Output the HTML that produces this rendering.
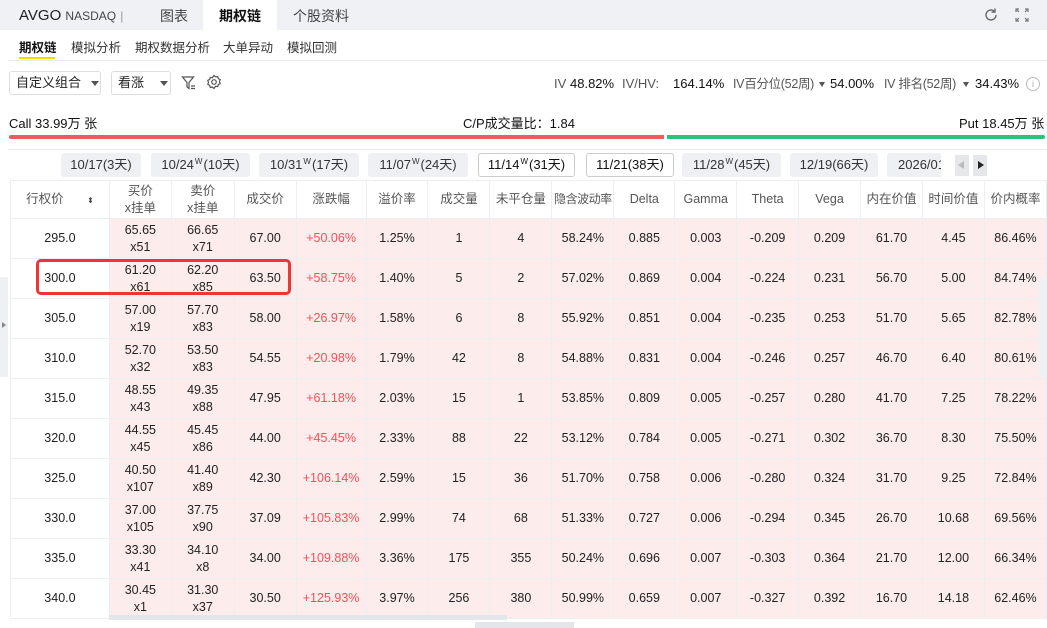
<!DOCTYPE html>
<html><head><meta charset="utf-8"><style>
*{margin:0;padding:0;box-sizing:border-box}
body{width:1047px;height:628px;overflow:hidden;background:#fff;font-family:"Liberation Sans","Noto Sans CJK SC",sans-serif;color:#222;font-size:13px;position:relative}
.a{position:absolute;white-space:nowrap}
.top{left:0;top:0;width:1047px;height:30px;background:#f0f1f4}
.tab{top:0;height:30px;line-height:32px;font-size:14px;color:#444}
.sel{background:#fff;color:#111;font-weight:bold;text-align:center}
.sub{top:37px;font-size:12.5px;color:#333}
.dd{top:71px;height:24px;border:1px solid #dcdde0;border-radius:3px;line-height:22px;padding-left:6px;font-size:13px}
.tri{display:inline-block;width:0;height:0;border-left:4px solid transparent;border-right:4px solid transparent;border-top:5px solid #555;vertical-align:middle}
.iv{top:76px;font-size:13px;color:#555;line-height:16px;height:16px}
.ivv{top:76px;font-size:13px;color:#111;line-height:16px;height:16px}
.date{top:153px;height:24px;line-height:24px;text-align:center;background:#eff0f3;border-radius:3px;font-size:13px;color:#333}
.date.b{background:#fff;border:1px solid #ccc;color:#111;line-height:22px}
.w{font-size:8px;position:relative;top:-5px;margin:0 1px}
table{position:absolute;left:10px;top:180px;border-collapse:collapse;table-layout:fixed}
td,th{border:1px solid #eceef1;text-align:center;font-size:12.5px;font-weight:normal;height:40px;padding:0;line-height:17px;white-space:nowrap;overflow:hidden}
th{color:#555;height:38px}
td.p{background:#fcecec}
td.r{color:#f0525a}
</style></head><body>
<div class="a top"></div>
<div class="a" style="left:19px;top:7px;font-size:15px;color:#222">AVGO <span style="font-size:12px;color:#444">NASDAQ</span> <span style="color:#999;font-size:12px">|</span></div>
<div class="a tab" style="left:160px">图表</div>
<div class="a tab sel" style="left:203px;width:74px">期权链</div>
<div class="a tab" style="left:293px">个股资料</div>
<svg class="a" style="left:983px;top:7px" width="16" height="16" viewBox="0 0 16 16"><path d="M13 8a5 5 0 1 1-1.6-3.7" fill="none" stroke="#666" stroke-width="1.4"/><path d="M12 1.5v3.5h-3.5" fill="none" stroke="#666" stroke-width="1.4"/></svg>
<svg class="a" style="left:1014px;top:7px" width="16" height="16" viewBox="0 0 16 16" fill="none" stroke="#777" stroke-width="1.2"><path d="M2 5V2h3M11 2h3v3M14 11v3h-3M5 14H2v-3M2 2l3 3M14 2l-3 3M14 14l-3-3M2 14l3-3"/></svg>
<div class="a sub" style="left:19px;font-weight:bold;color:#111">期权链</div>
<div class="a" style="left:19px;top:57px;width:36px;height:2px;background:#f7d900"></div>
<div class="a sub" style="left:71px">模拟分析</div>
<div class="a sub" style="left:135px">期权数据分析</div>
<div class="a sub" style="left:223px">大单异动</div>
<div class="a sub" style="left:287px">模拟回测</div>
<div class="a" style="left:8px;top:60px;width:1039px;height:1px;background:#e8e9ec"></div>
<div class="a dd" style="left:9px;width:92px">自定义组合 <span class="tri" style="margin-left:6px"></span></div>
<div class="a dd" style="left:111px;width:60px">看涨 <span class="tri" style="margin-left:12px"></span></div>
<svg class="a" style="left:181px;top:75px" width="16" height="16" viewBox="0 0 16 16" fill="none" stroke="#555" stroke-width="1.2"><path d="M1.5 2h11l-4.5 5.5v6l-2-1.5v-4.5z M10 11h4M10 13.5h4"/></svg>
<svg class="a" style="left:206px;top:74px" width="16" height="16" viewBox="0 0 16 16" fill="none" stroke="#555" stroke-width="1.2"><circle cx="8" cy="8" r="2.3"/><path d="M8 1.5l1.6 1.4 2.1-.3.6 2 1.9 1-.7 2 .7 2-1.9 1-.6 2-2.1-.3L8 14.5l-1.6-1.4-2.1.3-.6-2-1.9-1 .7-2-.7-2 1.9-1 .6-2 2.1.3z"/></svg>
<div class="a iv" style="left:554px">IV</div>
<div class="a ivv" style="left:570px">48.82%</div>
<div class="a iv" style="left:622px">IV/HV:</div>
<div class="a ivv" style="left:673px">164.14%</div>
<div class="a iv" style="left:733px;font-size:12.5px;letter-spacing:-0.3px">IV百分位(52周)</div>
<div class="a" style="left:819px;top:82px;border-left:3.5px solid transparent;border-right:3.5px solid transparent;border-top:5px solid #555"></div>
<div class="a ivv" style="left:830px">54.00%</div>
<div class="a iv" style="left:884px;font-size:12.5px;letter-spacing:-0.3px">IV 排名(52周)</div>
<div class="a" style="left:963px;top:82px;border-left:3.5px solid transparent;border-right:3.5px solid transparent;border-top:5px solid #555"></div>
<div class="a ivv" style="left:975px">34.43%</div>
<div class="a" style="left:1026px;top:77px;width:14px;height:14px;border:1px solid #bbb;border-radius:50%;font-size:9px;color:#aaa;text-align:center;line-height:12px">i</div>
<div class="a" style="left:9px;top:113px;font-size:13px;color:#111">Call 33.99万 张</div>
<div class="a" style="left:463px;top:113px;font-size:13px;color:#111">C/P成交量比：1.84</div>
<div class="a" style="left:959px;top:113px;font-size:13px;color:#111">Put 18.45万 张</div>
<div class="a" style="left:9px;top:135px;width:655px;height:4px;background:#f25a5a;border-radius:2px 0 0 2px"></div>
<div class="a" style="left:667px;top:135px;width:378px;height:4px;background:#28c47c;border-radius:0 2px 2px 0"></div>
<div class="a" style="left:8px;top:149px;width:1039px;height:1px;background:#e8e9ec"></div>
<div class="a date" style="left:61px;width:80px">10/17(3天)</div>
<div class="a date" style="left:151px;width:99px">10/24<span class="w">W</span>(10天)</div>
<div class="a date" style="left:259px;width:100px">10/31<span class="w">W</span>(17天)</div>
<div class="a date" style="left:368px;width:100px">11/07<span class="w">W</span>(24天)</div>
<div class="a date b" style="left:478px;width:97px">11/14<span class="w">W</span>(31天)</div>
<div class="a date b" style="left:586px;width:88px">11/21(38天)</div>
<div class="a date" style="left:682px;width:99px">11/28<span class="w">W</span>(45天)</div>
<div class="a date" style="left:790px;width:88px">12/19(66天)</div>
<div class="a date" style="left:887px;width:54px;border-radius:3px 0 0 3px;text-align:left;padding-left:11px;overflow:hidden">2026/01</div>
<div class="a" style="left:955px;top:155px;width:14px;height:21px;background:#e6e7ea"><span class="a" style="left:3px;top:6px;border-right:6px solid #bbb;border-top:4.5px solid transparent;border-bottom:4.5px solid transparent"></span></div>
<div class="a" style="left:973px;top:155px;width:14px;height:21px;background:#e6e7ea"><span class="a" style="left:5px;top:6px;border-left:6px solid #222;border-top:4.5px solid transparent;border-bottom:4.5px solid transparent"></span></div>
<table>
<colgroup><col style="width:99px"><col style="width:62px"><col style="width:63px"><col style="width:62px"><col style="width:70px"><col style="width:62px"><col style="width:62px"><col style="width:62px"><col style="width:62px"><col style="width:61px"><col style="width:62px"><col style="width:62px"><col style="width:62px"><col style="width:62px"><col style="width:62px"><col style="width:62px"></colgroup>
<tr><th>行权价 <span style="font-size:8px;color:#444;margin-left:20px">⬍</span></th><th>买价<br>x挂单</th><th>卖价<br>x挂单</th><th>成交价</th><th>涨跌幅</th><th>溢价率</th><th>成交量</th><th>未平仓量</th><th style="font-size:12px;letter-spacing:-0.5px">隐含波动率</th><th>Delta</th><th>Gamma</th><th>Theta</th><th>Vega</th><th>内在价值</th><th>时间价值</th><th>价内概率</th></tr>
<tr><td>295.0</td><td class="p">65.65<br>x51</td><td class="p">66.65<br>x71</td><td class="p">67.00</td><td class="p r">+50.06%</td><td class="p">1.25%</td><td class="p">1</td><td class="p">4</td><td class="p">58.24%</td><td class="p">0.885</td><td class="p">0.003</td><td class="p">-0.209</td><td class="p">0.209</td><td class="p">61.70</td><td class="p">4.45</td><td class="p">86.46%</td></tr>
<tr><td>300.0</td><td class="p">61.20<br>x61</td><td class="p">62.20<br>x85</td><td class="p">63.50</td><td class="p r">+58.75%</td><td class="p">1.40%</td><td class="p">5</td><td class="p">2</td><td class="p">57.02%</td><td class="p">0.869</td><td class="p">0.004</td><td class="p">-0.224</td><td class="p">0.231</td><td class="p">56.70</td><td class="p">5.00</td><td class="p">84.74%</td></tr>
<tr><td>305.0</td><td class="p">57.00<br>x19</td><td class="p">57.70<br>x83</td><td class="p">58.00</td><td class="p r">+26.97%</td><td class="p">1.58%</td><td class="p">6</td><td class="p">8</td><td class="p">55.92%</td><td class="p">0.851</td><td class="p">0.004</td><td class="p">-0.235</td><td class="p">0.253</td><td class="p">51.70</td><td class="p">5.65</td><td class="p">82.78%</td></tr>
<tr><td>310.0</td><td class="p">52.70<br>x32</td><td class="p">53.50<br>x83</td><td class="p">54.55</td><td class="p r">+20.98%</td><td class="p">1.79%</td><td class="p">42</td><td class="p">8</td><td class="p">54.88%</td><td class="p">0.831</td><td class="p">0.004</td><td class="p">-0.246</td><td class="p">0.257</td><td class="p">46.70</td><td class="p">6.40</td><td class="p">80.61%</td></tr>
<tr><td>315.0</td><td class="p">48.55<br>x43</td><td class="p">49.35<br>x88</td><td class="p">47.95</td><td class="p r">+61.18%</td><td class="p">2.03%</td><td class="p">15</td><td class="p">1</td><td class="p">53.85%</td><td class="p">0.809</td><td class="p">0.005</td><td class="p">-0.257</td><td class="p">0.280</td><td class="p">41.70</td><td class="p">7.25</td><td class="p">78.22%</td></tr>
<tr><td>320.0</td><td class="p">44.55<br>x45</td><td class="p">45.45<br>x86</td><td class="p">44.00</td><td class="p r">+45.45%</td><td class="p">2.33%</td><td class="p">88</td><td class="p">22</td><td class="p">53.12%</td><td class="p">0.784</td><td class="p">0.005</td><td class="p">-0.271</td><td class="p">0.302</td><td class="p">36.70</td><td class="p">8.30</td><td class="p">75.50%</td></tr>
<tr><td>325.0</td><td class="p">40.50<br>x107</td><td class="p">41.40<br>x89</td><td class="p">42.30</td><td class="p r">+106.14%</td><td class="p">2.59%</td><td class="p">15</td><td class="p">36</td><td class="p">51.70%</td><td class="p">0.758</td><td class="p">0.006</td><td class="p">-0.280</td><td class="p">0.324</td><td class="p">31.70</td><td class="p">9.25</td><td class="p">72.84%</td></tr>
<tr><td>330.0</td><td class="p">37.00<br>x105</td><td class="p">37.75<br>x90</td><td class="p">37.09</td><td class="p r">+105.83%</td><td class="p">2.99%</td><td class="p">74</td><td class="p">68</td><td class="p">51.33%</td><td class="p">0.727</td><td class="p">0.006</td><td class="p">-0.294</td><td class="p">0.345</td><td class="p">26.70</td><td class="p">10.68</td><td class="p">69.56%</td></tr>
<tr><td>335.0</td><td class="p">33.30<br>x41</td><td class="p">34.10<br>x8</td><td class="p">34.00</td><td class="p r">+109.88%</td><td class="p">3.36%</td><td class="p">175</td><td class="p">355</td><td class="p">50.24%</td><td class="p">0.696</td><td class="p">0.007</td><td class="p">-0.303</td><td class="p">0.364</td><td class="p">21.70</td><td class="p">12.00</td><td class="p">66.34%</td></tr>
<tr><td>340.0</td><td class="p">30.45<br>x1</td><td class="p">31.30<br>x37</td><td class="p">30.50</td><td class="p r">+125.93%</td><td class="p">3.97%</td><td class="p">256</td><td class="p">380</td><td class="p">50.99%</td><td class="p">0.659</td><td class="p">0.007</td><td class="p">-0.327</td><td class="p">0.392</td><td class="p">16.70</td><td class="p">14.18</td><td class="p">62.46%</td></tr>
</table>
<div class="a" style="left:36px;top:259px;width:255px;height:36px;border:3px solid #ee3535;border-radius:5px"></div>
<div class="a" style="left:0;top:277px;width:8px;height:100px;background:#eef0f3"></div>
<div class="a" style="left:2px;top:322px;border-left:4px solid #888;border-top:3px solid transparent;border-bottom:3px solid transparent"></div>
<div class="a" style="left:1039px;top:277px;width:8px;height:100px;background:#eef0f3"></div>
<div class="a" style="left:109px;top:615px;width:398px;height:5px;background:#e3e6ea"></div>
<div class="a" style="left:475px;top:622px;width:99px;height:6px;background:#e3e6ea"></div>
</body></html>
